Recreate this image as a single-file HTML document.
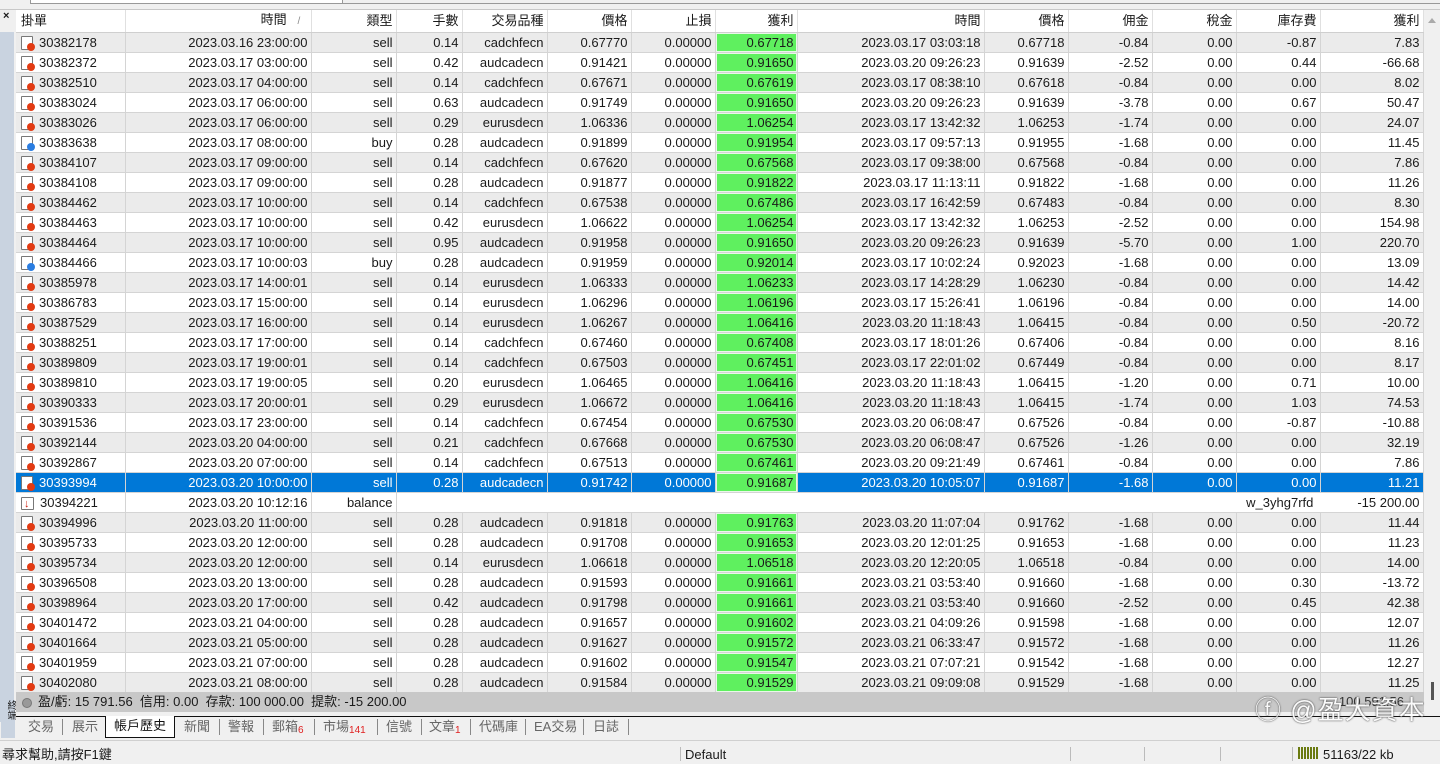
<!DOCTYPE html>
<html><head><meta charset="utf-8">
<style>
*{margin:0;padding:0;box-sizing:border-box}
body{width:1440px;height:756px;overflow:hidden;background:#f0f0f0;font-family:"Liberation Sans","Noto Sans CJK TC",sans-serif;font-size:13px;color:#1a1a1a;position:relative}
#top{position:absolute;left:0;top:0;width:1440px;height:10px;background:#f0f0f0;border-bottom:1px solid #c8c8c8}
#top .a{position:absolute;left:30px;top:0;width:313px;height:4px;border:1px solid #999;border-top:none;background:#fff}
#top .b{position:absolute;left:343px;top:0;width:1097px;height:4px;border-bottom:1px solid #999}
#left{position:absolute;left:0;top:10px;width:16px;height:728px;background:#f0f0f0}
#left .x{position:absolute;left:3px;top:0;font-size:11px;font-weight:bold}
#left .p{position:absolute;left:0;top:22px;width:14px;height:690px;background:#c9d3e0}
#left .v{position:absolute;left:1px;top:690px;width:14px;height:38px;font-size:10px;line-height:10px;writing-mode:vertical-rl;background:#c9d3e0}
table{position:absolute;left:16px;top:10px;border-collapse:collapse;table-layout:fixed;width:1407px;background:#fff}
td,th{height:20px;padding:0 3px 0 0;text-align:right;white-space:nowrap;overflow:hidden;border-right:1px solid #d4d4d4;border-bottom:1px solid #d4d4d4;font-weight:normal;line-height:19px}
th{height:22px;background:#fff;border-right:1px solid #e0e0e0;border-bottom:1px solid #cfcfcf}
th:first-child,td:first-child{text-align:left;padding-left:5px}
tr.e td{background:#ebebeb}
tr.sel td{background:#0078d7;color:#fff}
td.g,tr.e td.g,tr.sel td.g{background:#5ff05f;color:#1a1a1a;box-shadow:inset 0 0 0 1px #e8f8e8}
i.s,i.b,i.r{display:inline-block;width:12px;height:14px;border:1px solid #777;background:#fff;position:relative;vertical-align:-3px;margin-right:6px;border-radius:1px}
i.s:after,i.b:after{content:"";position:absolute;left:5px;top:6px;width:8px;height:8px;border-radius:50%;background:#e23a12}
i.b:after{background:#2a7de1}
i.r{width:13px;height:13px}
i.r:after{content:"↓";position:absolute;left:2px;top:-3px;color:#d02010;font-weight:bold;font-size:11px}
#sum{position:absolute;left:16px;top:692px;width:1408px;height:20px;background:#c8c8c8;font-size:13px;line-height:20px;padding-left:22px}
#sum:before{content:"";position:absolute;left:6px;top:6px;width:8px;height:8px;border-radius:50%;background:#999;border:1px solid #777}
#sum .r{position:absolute;right:20px;top:0;color:#333}
#sb{position:absolute;left:1424px;top:10px;width:16px;height:702px;background:#f0f0f0}
#sb .t{position:absolute;left:4px;top:4px;width:0;height:0;border:4px solid transparent;border-bottom:5px solid #aaa}
#sb .k{position:absolute;left:7px;top:672px;width:3px;height:18px;background:#555}
#tabs{position:absolute;left:16px;top:712px;width:1424px;height:26px;background:#f0f0f0}
#tabs .ln{position:absolute;left:0;top:4px;width:1424px;height:1px;background:#111}
#tabs span{position:absolute;top:6px;font-size:13px;color:#666;line-height:18px}
#tabs .sep{width:1px;height:16px;background:#888;top:7px}
#tabs .act{left:89px;top:4px;width:70px;height:22px;background:#fff;border:1px solid #111;border-top:none;color:#111;text-align:center;line-height:20px}
#tabs sub{color:#e02020;font-size:10px;vertical-align:-2px}
#st{position:absolute;left:0;top:740px;width:1440px;height:16px;background:#f0f0f0;border-top:1px solid #d0d0d0;font-size:13px;line-height:18px}
#st span{position:absolute;top:5px}
#st .d{width:1px;height:14px;background:#bbb;top:6px}
#wm{position:absolute;left:1255px;top:690px;font-size:26px;color:#fff;text-shadow:0 0 2px #555,0 0 1px #333;letter-spacing:1px;opacity:.9}
</style></head><body>
<div id="top"><div class="a"></div><div class="b"></div></div>
<div id="left"><div class="x">×</div><div class="p"></div><div class="v">終端</div></div>
<table>
<colgroup><col style="width:109px"><col style="width:186px"><col style="width:85px"><col style="width:66px"><col style="width:85px"><col style="width:84px"><col style="width:84px"><col style="width:82px"><col style="width:187px"><col style="width:84px"><col style="width:84px"><col style="width:84px"><col style="width:84px"><col style="width:103px"></colgroup>
<tr><th>掛單</th><th>時間 &nbsp;&nbsp;<span style="color:#888;font-size:10px">/</span>&nbsp;&nbsp;</th><th>類型</th><th>手數</th><th>交易品種</th><th>價格</th><th>止損</th><th>獲利</th><th>時間</th><th>價格</th><th>佣金</th><th>稅金</th><th>庫存費</th><th>獲利</th></tr>
<tr class="e"><td><i class="s"></i>30382178<td>2023.03.16 23:00:00<td>sell<td>0.14<td>cadchfecn<td>0.67770<td>0.00000<td class="g">0.67718<td>2023.03.17 03:03:18<td>0.67718<td>-0.84<td>0.00<td>-0.87<td>7.83</tr>
<tr><td><i class="s"></i>30382372<td>2023.03.17 03:00:00<td>sell<td>0.42<td>audcadecn<td>0.91421<td>0.00000<td class="g">0.91650<td>2023.03.20 09:26:23<td>0.91639<td>-2.52<td>0.00<td>0.44<td>-66.68</tr>
<tr class="e"><td><i class="s"></i>30382510<td>2023.03.17 04:00:00<td>sell<td>0.14<td>cadchfecn<td>0.67671<td>0.00000<td class="g">0.67619<td>2023.03.17 08:38:10<td>0.67618<td>-0.84<td>0.00<td>0.00<td>8.02</tr>
<tr><td><i class="s"></i>30383024<td>2023.03.17 06:00:00<td>sell<td>0.63<td>audcadecn<td>0.91749<td>0.00000<td class="g">0.91650<td>2023.03.20 09:26:23<td>0.91639<td>-3.78<td>0.00<td>0.67<td>50.47</tr>
<tr class="e"><td><i class="s"></i>30383026<td>2023.03.17 06:00:00<td>sell<td>0.29<td>eurusdecn<td>1.06336<td>0.00000<td class="g">1.06254<td>2023.03.17 13:42:32<td>1.06253<td>-1.74<td>0.00<td>0.00<td>24.07</tr>
<tr><td><i class="b"></i>30383638<td>2023.03.17 08:00:00<td>buy<td>0.28<td>audcadecn<td>0.91899<td>0.00000<td class="g">0.91954<td>2023.03.17 09:57:13<td>0.91955<td>-1.68<td>0.00<td>0.00<td>11.45</tr>
<tr class="e"><td><i class="s"></i>30384107<td>2023.03.17 09:00:00<td>sell<td>0.14<td>cadchfecn<td>0.67620<td>0.00000<td class="g">0.67568<td>2023.03.17 09:38:00<td>0.67568<td>-0.84<td>0.00<td>0.00<td>7.86</tr>
<tr><td><i class="s"></i>30384108<td>2023.03.17 09:00:00<td>sell<td>0.28<td>audcadecn<td>0.91877<td>0.00000<td class="g">0.91822<td>2023.03.17 11:13:11<td>0.91822<td>-1.68<td>0.00<td>0.00<td>11.26</tr>
<tr class="e"><td><i class="s"></i>30384462<td>2023.03.17 10:00:00<td>sell<td>0.14<td>cadchfecn<td>0.67538<td>0.00000<td class="g">0.67486<td>2023.03.17 16:42:59<td>0.67483<td>-0.84<td>0.00<td>0.00<td>8.30</tr>
<tr><td><i class="s"></i>30384463<td>2023.03.17 10:00:00<td>sell<td>0.42<td>eurusdecn<td>1.06622<td>0.00000<td class="g">1.06254<td>2023.03.17 13:42:32<td>1.06253<td>-2.52<td>0.00<td>0.00<td>154.98</tr>
<tr class="e"><td><i class="s"></i>30384464<td>2023.03.17 10:00:00<td>sell<td>0.95<td>audcadecn<td>0.91958<td>0.00000<td class="g">0.91650<td>2023.03.20 09:26:23<td>0.91639<td>-5.70<td>0.00<td>1.00<td>220.70</tr>
<tr><td><i class="b"></i>30384466<td>2023.03.17 10:00:03<td>buy<td>0.28<td>audcadecn<td>0.91959<td>0.00000<td class="g">0.92014<td>2023.03.17 10:02:24<td>0.92023<td>-1.68<td>0.00<td>0.00<td>13.09</tr>
<tr class="e"><td><i class="s"></i>30385978<td>2023.03.17 14:00:01<td>sell<td>0.14<td>eurusdecn<td>1.06333<td>0.00000<td class="g">1.06233<td>2023.03.17 14:28:29<td>1.06230<td>-0.84<td>0.00<td>0.00<td>14.42</tr>
<tr><td><i class="s"></i>30386783<td>2023.03.17 15:00:00<td>sell<td>0.14<td>eurusdecn<td>1.06296<td>0.00000<td class="g">1.06196<td>2023.03.17 15:26:41<td>1.06196<td>-0.84<td>0.00<td>0.00<td>14.00</tr>
<tr class="e"><td><i class="s"></i>30387529<td>2023.03.17 16:00:00<td>sell<td>0.14<td>eurusdecn<td>1.06267<td>0.00000<td class="g">1.06416<td>2023.03.20 11:18:43<td>1.06415<td>-0.84<td>0.00<td>0.50<td>-20.72</tr>
<tr><td><i class="s"></i>30388251<td>2023.03.17 17:00:00<td>sell<td>0.14<td>cadchfecn<td>0.67460<td>0.00000<td class="g">0.67408<td>2023.03.17 18:01:26<td>0.67406<td>-0.84<td>0.00<td>0.00<td>8.16</tr>
<tr class="e"><td><i class="s"></i>30389809<td>2023.03.17 19:00:01<td>sell<td>0.14<td>cadchfecn<td>0.67503<td>0.00000<td class="g">0.67451<td>2023.03.17 22:01:02<td>0.67449<td>-0.84<td>0.00<td>0.00<td>8.17</tr>
<tr><td><i class="s"></i>30389810<td>2023.03.17 19:00:05<td>sell<td>0.20<td>eurusdecn<td>1.06465<td>0.00000<td class="g">1.06416<td>2023.03.20 11:18:43<td>1.06415<td>-1.20<td>0.00<td>0.71<td>10.00</tr>
<tr class="e"><td><i class="s"></i>30390333<td>2023.03.17 20:00:01<td>sell<td>0.29<td>eurusdecn<td>1.06672<td>0.00000<td class="g">1.06416<td>2023.03.20 11:18:43<td>1.06415<td>-1.74<td>0.00<td>1.03<td>74.53</tr>
<tr><td><i class="s"></i>30391536<td>2023.03.17 23:00:00<td>sell<td>0.14<td>cadchfecn<td>0.67454<td>0.00000<td class="g">0.67530<td>2023.03.20 06:08:47<td>0.67526<td>-0.84<td>0.00<td>-0.87<td>-10.88</tr>
<tr class="e"><td><i class="s"></i>30392144<td>2023.03.20 04:00:00<td>sell<td>0.21<td>cadchfecn<td>0.67668<td>0.00000<td class="g">0.67530<td>2023.03.20 06:08:47<td>0.67526<td>-1.26<td>0.00<td>0.00<td>32.19</tr>
<tr><td><i class="s"></i>30392867<td>2023.03.20 07:00:00<td>sell<td>0.14<td>cadchfecn<td>0.67513<td>0.00000<td class="g">0.67461<td>2023.03.20 09:21:49<td>0.67461<td>-0.84<td>0.00<td>0.00<td>7.86</tr>
<tr class="sel"><td><i class="s"></i>30393994<td>2023.03.20 10:00:00<td>sell<td>0.28<td>audcadecn<td>0.91742<td>0.00000<td class="g">0.91687<td>2023.03.20 10:05:07<td>0.91687<td>-1.68<td>0.00<td>0.00<td>11.21</tr>
<tr><td><i class="r"></i>30394221<td>2023.03.20 10:12:16<td>balance<td colspan="10" style="border-right:none">w_3yhg7rfd&nbsp;</td><td>-15 200.00</tr>
<tr class="e"><td><i class="s"></i>30394996<td>2023.03.20 11:00:00<td>sell<td>0.28<td>audcadecn<td>0.91818<td>0.00000<td class="g">0.91763<td>2023.03.20 11:07:04<td>0.91762<td>-1.68<td>0.00<td>0.00<td>11.44</tr>
<tr><td><i class="s"></i>30395733<td>2023.03.20 12:00:00<td>sell<td>0.28<td>audcadecn<td>0.91708<td>0.00000<td class="g">0.91653<td>2023.03.20 12:01:25<td>0.91653<td>-1.68<td>0.00<td>0.00<td>11.23</tr>
<tr class="e"><td><i class="s"></i>30395734<td>2023.03.20 12:00:00<td>sell<td>0.14<td>eurusdecn<td>1.06618<td>0.00000<td class="g">1.06518<td>2023.03.20 12:20:05<td>1.06518<td>-0.84<td>0.00<td>0.00<td>14.00</tr>
<tr><td><i class="s"></i>30396508<td>2023.03.20 13:00:00<td>sell<td>0.28<td>audcadecn<td>0.91593<td>0.00000<td class="g">0.91661<td>2023.03.21 03:53:40<td>0.91660<td>-1.68<td>0.00<td>0.30<td>-13.72</tr>
<tr class="e"><td><i class="s"></i>30398964<td>2023.03.20 17:00:00<td>sell<td>0.42<td>audcadecn<td>0.91798<td>0.00000<td class="g">0.91661<td>2023.03.21 03:53:40<td>0.91660<td>-2.52<td>0.00<td>0.45<td>42.38</tr>
<tr><td><i class="s"></i>30401472<td>2023.03.21 04:00:00<td>sell<td>0.28<td>audcadecn<td>0.91657<td>0.00000<td class="g">0.91602<td>2023.03.21 04:09:26<td>0.91598<td>-1.68<td>0.00<td>0.00<td>12.07</tr>
<tr class="e"><td><i class="s"></i>30401664<td>2023.03.21 05:00:00<td>sell<td>0.28<td>audcadecn<td>0.91627<td>0.00000<td class="g">0.91572<td>2023.03.21 06:33:47<td>0.91572<td>-1.68<td>0.00<td>0.00<td>11.26</tr>
<tr><td><i class="s"></i>30401959<td>2023.03.21 07:00:00<td>sell<td>0.28<td>audcadecn<td>0.91602<td>0.00000<td class="g">0.91547<td>2023.03.21 07:07:21<td>0.91542<td>-1.68<td>0.00<td>0.00<td>12.27</tr>
<tr class="e"><td><i class="s"></i>30402080<td>2023.03.21 08:00:00<td>sell<td>0.28<td>audcadecn<td>0.91584<td>0.00000<td class="g">0.91529<td>2023.03.21 09:09:08<td>0.91529<td>-1.68<td>0.00<td>0.00<td>11.25</tr>
</table>
<div id="sb"><div class="t"></div><div class="k"></div></div>
<div id="sum">盈/虧: 15 791.56 &nbsp;信用: 0.00 &nbsp;存款: 100 000.00 &nbsp;提款: -15 200.00<span class="r">100 591.56</span></div>
<div id="tabs"><div class="ln"></div>
<span style="left:12px">交易</span><span class="sep" style="left:46px"></span>
<span style="left:56px">展示</span>
<span class="act">帳戶歷史</span>
<span style="left:168px">新聞</span><span class="sep" style="left:203px"></span>
<span style="left:212px">警報</span><span class="sep" style="left:247px"></span>
<span style="left:256px">郵箱<sub>6</sub></span><span class="sep" style="left:298px"></span>
<span style="left:307px">市場<sub>141</sub></span><span class="sep" style="left:361px"></span>
<span style="left:370px">信號</span><span class="sep" style="left:405px"></span>
<span style="left:413px">文章<sub>1</sub></span><span class="sep" style="left:454px"></span>
<span style="left:463px">代碼庫</span><span class="sep" style="left:509px"></span>
<span style="left:518px">EA交易</span><span class="sep" style="left:567px"></span>
<span style="left:577px">日誌</span><span class="sep" style="left:612px"></span>
</div>
<div id="st"><span style="left:2px">尋求幫助,請按F1鍵</span><span class="d" style="left:680px"></span><span style="left:685px">Default</span><span class="d" style="left:1070px"></span><span class="d" style="left:1144px"></span><span class="d" style="left:1220px"></span><span class="d" style="left:1292px"></span>
<span style="left:1298px;top:6px;width:20px;height:12px;background:repeating-linear-gradient(90deg,#6a7a10 0 2px,#f0f0f0 2px 3px)"></span><span style="left:1323px">51163/22 kb</span></div>
<div id="wm">ⓕ @盈大資本</div>
</body></html>
